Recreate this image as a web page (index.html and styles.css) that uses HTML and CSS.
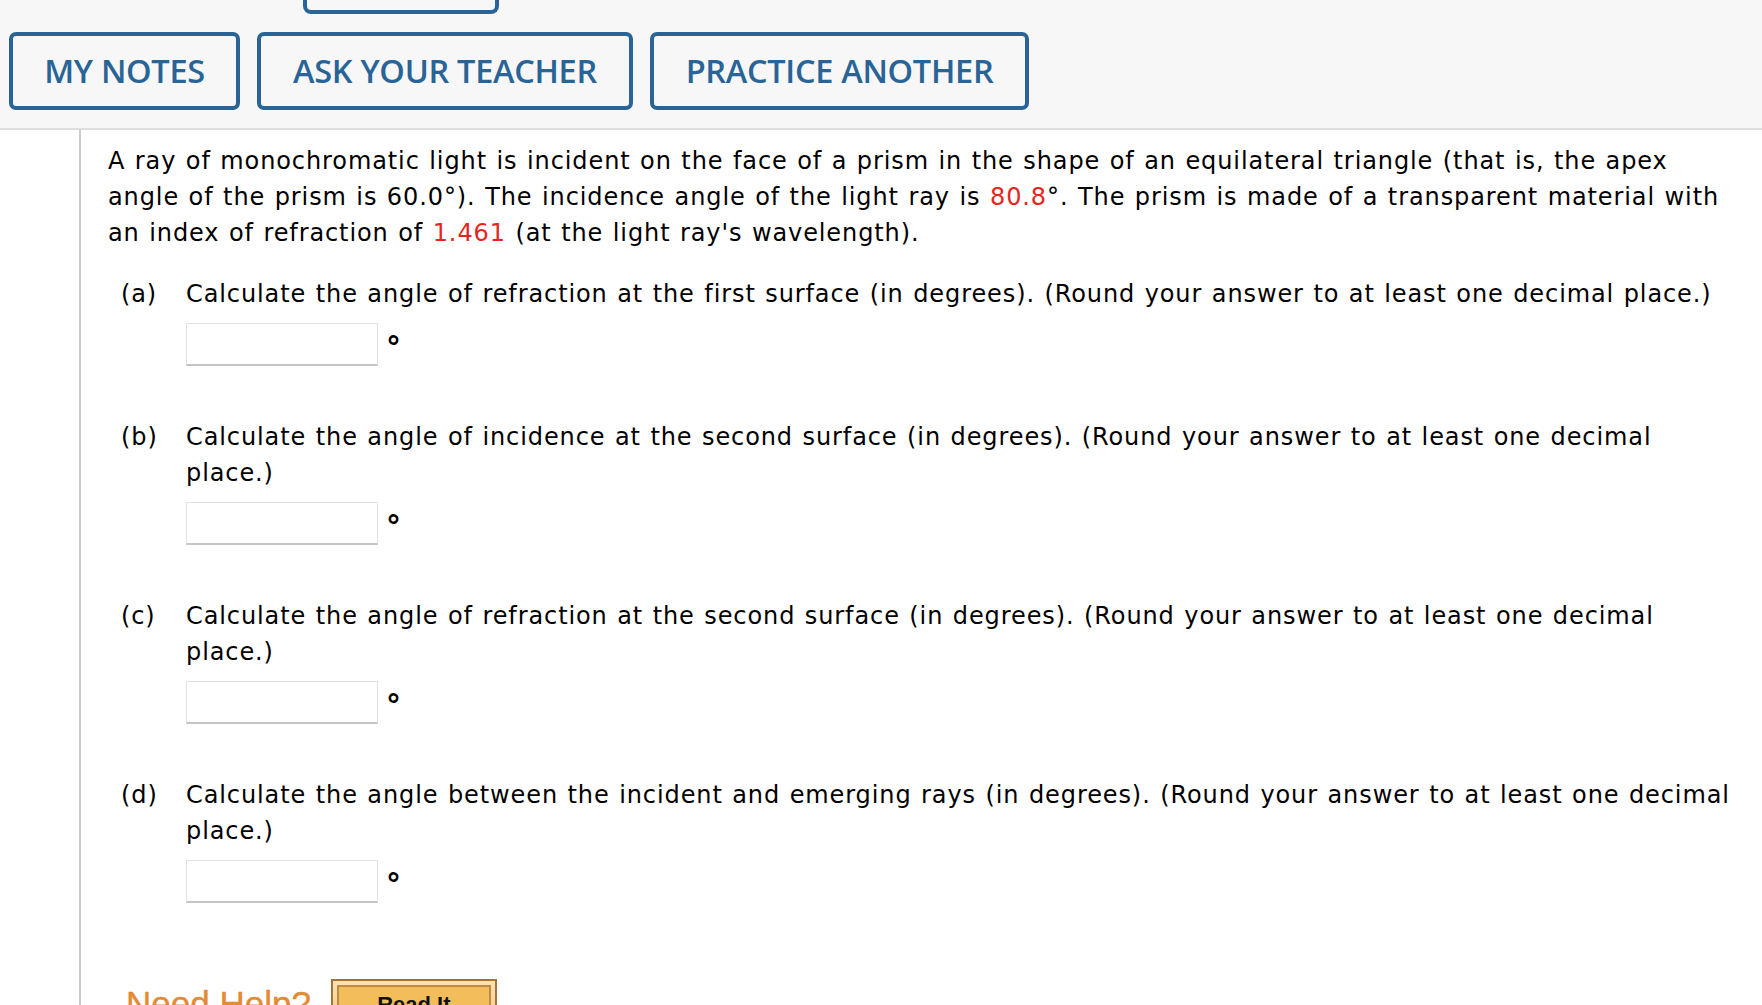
FILE: index.html
```html
<!DOCTYPE html>
<html lang="en">
<head>
<meta charset="utf-8">
<title>Prism question</title>
<link rel="stylesheet" href="styles.css">
</head>
<body>
<div class="header">
  <div class="prev-row"><span class="prev-btn"></span></div>
  <div class="btn-row">
    <a class="btn btn-notes">MY NOTES</a>
    <a class="btn btn-ask">ASK YOUR TEACHER</a>
    <a class="btn btn-practice">PRACTICE ANOTHER</a>
  </div>
</div>
<div class="main">
  <p class="intro">A ray of monochromatic light is incident on the face of a prism in the shape of an equilateral triangle (that is, the apex angle of the prism is 60.0°). The incidence angle of the light ray is <span class="red">80.8</span>°. The prism is made of a transparent material with an index of refraction of <span class="red">1.461</span> (at the light ray's wavelength).</p>
  <div class="part">
    <div class="label">(a)</div>
    <div class="body">
      <div class="prompt">Calculate the angle of refraction at the first surface (in degrees). (Round your answer to at least one decimal place.)</div>
      <div class="answer"><span class="box"></span><span class="deg">°</span></div>
    </div>
  </div>
  <div class="part">
    <div class="label">(b)</div>
    <div class="body">
      <div class="prompt">Calculate the angle of incidence at the second surface (in degrees). (Round your answer to at least one decimal place.)</div>
      <div class="answer"><span class="box"></span><span class="deg">°</span></div>
    </div>
  </div>
  <div class="part">
    <div class="label">(c)</div>
    <div class="body">
      <div class="prompt">Calculate the angle of refraction at the second surface (in degrees). (Round your answer to at least one decimal place.)</div>
      <div class="answer"><span class="box"></span><span class="deg">°</span></div>
    </div>
  </div>
  <div class="part">
    <div class="label">(d)</div>
    <div class="body">
      <div class="prompt">Calculate the angle between the incident and emerging rays (in degrees). (Round your answer to at least one decimal place.)</div>
      <div class="answer"><span class="box"></span><span class="deg">°</span></div>
    </div>
  </div>
  <div class="help">
    <span class="need">Need Help?</span>
    <span class="readit"><span class="readit-inner">Read It</span></span>
  </div>
</div>
</body>
</html>
```
FILE: styles.css
```css
html, body {
  margin: 0;
  padding: 0;
  background: #ffffff;
}
body {
  font-family: "DejaVu Sans", Verdana, sans-serif;
  color: #000;
}
.header {
  background: #f7f7f7;
  border-bottom: 2px solid #dddddd;
  height: 128px;
}
.prev-row {
  height: 14px;
  display: flex;
}
.prev-btn {
  margin-left: 303px;
  width: 188px;
  height: 10px;
  border: 4px solid #296496;
  border-top: none;
  border-radius: 0 0 8px 8px;
}
.btn-row {
  display: flex;
  gap: 17px;
  margin: 18px 0 0 9px;
}
.btn {
  box-sizing: border-box;
  height: 78px;
  border: 4px solid #296496;
  border-radius: 7px;
  display: flex;
  align-items: center;
  justify-content: center;
  font-family: "Open Sans", sans-serif;
  font-weight: 600;
  font-size: 32.5px;
  color: #296496;
  letter-spacing: -0.3px;
  padding-bottom: 2px;
}
.btn-notes { width: 231px; }
.btn-ask { width: 376px; }
.btn-practice { width: 379px; }
.main {
  margin-left: 79px;
  border-left: 2px solid #cccccc;
  padding: 13px 21px 0 27px;
  min-height: 900px;
  font-size: 24px;
  line-height: 36px;
  letter-spacing: 0.9px;
  word-spacing: 1px;
}
.intro {
  margin: 0 0 25px 0;
}
.red {
  color: #e5261f;
}
.part {
  display: flex;
  margin-left: 13px;
  margin-bottom: 53px;
}
.label {
  width: 65px;
  flex: none;
}
.body {
  flex: 1;
}
.answer {
  display: flex;
  align-items: flex-start;
  margin-top: 11px;
}
.box {
  box-sizing: border-box;
  width: 192px;
  height: 43px;
  background: #fff;
  border: 1px solid #e2e2e2;
  border-bottom: 2px solid #c4c4c4;
}
.deg {
  margin-left: 8px;
  font-size: 30px;
  font-weight: bold;
  line-height: 30px;
  margin-top: 10px;
}
.help {
  display: flex;
  align-items: flex-start;
  margin: 76px 0 0 18px;
  letter-spacing: 0;
  word-spacing: 0;
}
.need {
  font-family: "Liberation Sans", Arial, sans-serif;
  font-size: 35px;
  line-height: 34px;
  color: #e38a32;
  margin-top: 8px;
  -webkit-text-stroke: 0.4px #e38a32;
}
.readit {
  margin-left: 20px;
  box-sizing: border-box;
  width: 166px;
  height: 50px;
  border: 2px solid #a8723a;
  background: linear-gradient(#fbe3b8, #f4c778);
  padding: 4px;
  display: block;
}
.readit-inner {
  display: block;
  box-sizing: border-box;
  height: 100%;
  border: 2px solid #c08a45;
  background: #f2bd5a;
  font-family: "Liberation Sans", Arial, sans-serif;
  font-weight: bold;
  font-size: 22px;
  text-align: center;
  line-height: 36px;
  color: #111;
}
```
